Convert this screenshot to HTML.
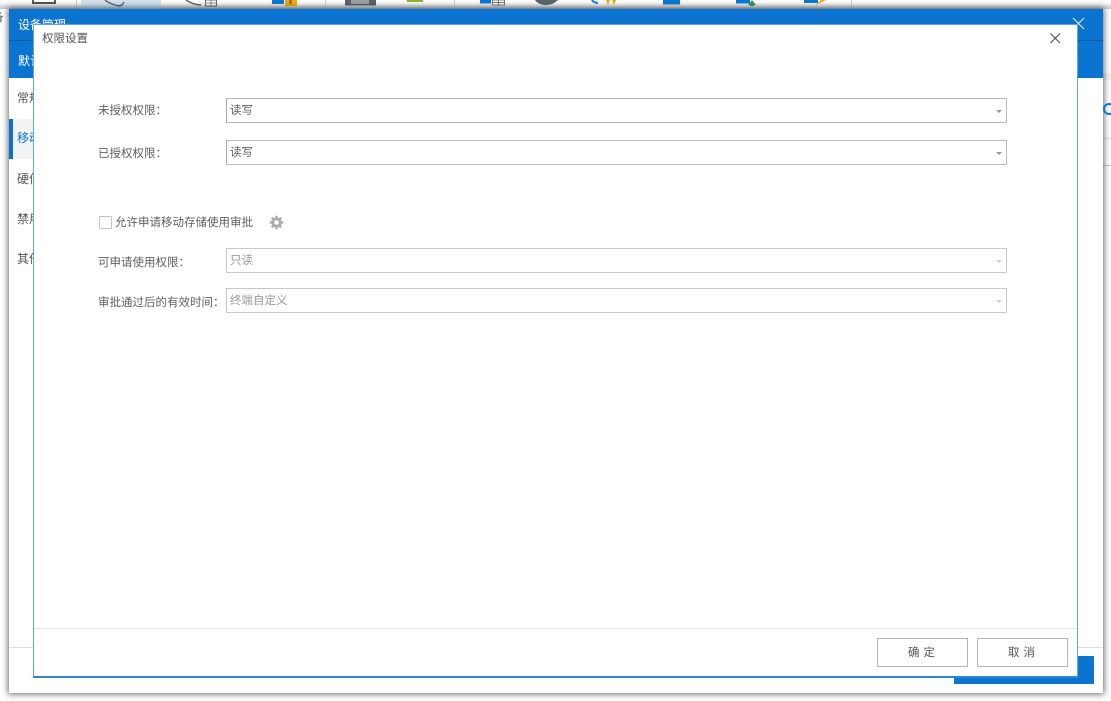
<!DOCTYPE html>
<html><head><meta charset="utf-8"><style>
html,body{margin:0;padding:0;background:#fff}
body{width:1111px;height:701px;position:relative;overflow:hidden;font-family:"Liberation Sans","Noto Sans CJK SC",sans-serif;font-size:11.5px;color:#5f5f5f}
.a{position:absolute}
.t{position:absolute;line-height:16px;white-space:nowrap;filter:blur(.3px)}
.sel{position:absolute;left:226px;width:779px;height:23px;border:1px solid #b9b9b9;border-left-color:#a8a8a8;background:#fff}
.sel span{position:absolute;left:3px;top:4px;line-height:16px;filter:blur(.3px)}
.sel i{position:absolute;right:4px;top:11px;width:0;height:0;border:3px solid transparent;border-top:3px solid #999;border-bottom:0}
.dis{border-color:#c8c8c8}.dis span{color:#999}.dis i{border-top-color:#ccc}
.btn{position:absolute;top:638px;width:89px;height:27px;border:1px solid #b5b5b5;background:#fff;text-align:center;line-height:29px;letter-spacing:4px;text-indent:2px;font-weight:400;color:#555;filter:blur(.2px)}
</style></head><body>
<div class="a" style="left:0;top:0;width:1111px;height:9px;background:linear-gradient(#fff,#f6f6f6 35%,#c4c4c4)"></div>
<div class="a" style="left:81px;top:0;width:80px;height:9px;background:linear-gradient(#d3e3f1,#c4d6e6)"></div>
<div class="a" style="left:76px;top:0;width:1px;height:8px;background:#ccc"></div>
<div class="a" style="left:325px;top:0;width:1px;height:8px;background:#ccc"></div>
<div class="a" style="left:454px;top:0;width:1px;height:8px;background:#ccc"></div>
<div class="a" style="left:851px;top:0;width:1px;height:8px;background:#ccc"></div>
<svg class="a" style="left:0;top:0" width="1111" height="9" viewBox="0 0 1111 9">
<path d="M33 0v3h22V0" fill="none" stroke="#555" stroke-width="2"/>
<path d="M105 0c2 2 8 5 14 6l3-1 2-3" fill="none" stroke="#666" stroke-width="1.500"/>
<path d="M186 0c3 2 9 5 15 5" fill="none" stroke="#666" stroke-width="1.500"/>
<rect x="205.500" y="0" width="11" height="6" fill="#fff" stroke="#666"/><path d="M211 0v6M205 3h11" stroke="#888"/>
<rect x="272" y="0" width="12" height="4" fill="#0a78d2"/><rect x="285" y="0" width="12" height="6" fill="#eeaa10"/><rect x="289.500" y="0" width="2" height="4" fill="#8a6400"/>
<rect x="345" y="0" width="31" height="5.500" fill="#5b5f6b"/><path d="M352 0v4M354 0v4M356 0v4M358 0v4M360 0v4M362 0v4M364 0v4M366 0v4M368 0v4" stroke="#ddd"/>
<rect x="407" y="0" width="16" height="2" fill="#8db32c"/>
<rect x="480" y="0" width="11" height="3.500" fill="#0a78d2"/><rect x="492.500" y="0" width="12" height="5" fill="#fff" stroke="#777"/><path d="M498.500 0v5M492 2.500h12" stroke="#777"/>
<path d="M535 0c2 3 6 5 11 5s9-2 12-5z" fill="#5b6470"/>
<path d="M592 0c1 2 4 3 6 3" fill="none" stroke="#0a78d2" stroke-width="2"/><path d="M606 0l2 5 2-5zM612 0l2 5 2-5z" fill="#eeaa10"/>
<rect x="663" y="0" width="17" height="4.500" fill="#0a78d2"/>
<rect x="736" y="0" width="14" height="3.500" fill="#0a78d2"/><path d="M752 0l4 5h-2v1h-4v-1h-2z" fill="#3c9a50"/>
<rect x="804" y="0" width="14" height="3" fill="#0a78d2"/><path d="M815 6l6-6h5l-6 3z" fill="#eeaa10"/>
</svg>
<div class="t" style="left:-8px;top:10px;color:#555">备</div>
<div class="a" style="left:1103px;top:73px;width:8px;height:7px;background:#f1f1f1"></div>
<div class="a" style="left:1103px;top:138px;width:8px;height:1px;background:#ddd"></div>
<div class="a" style="left:1103px;top:165px;width:8px;height:1px;background:#c4c4c4"></div>

<div class="a" style="left:9px;top:9px;width:1094px;height:684px;background:#fff;box-shadow:0 0 6px 1px rgba(0,0,0,.6)"></div>
<div class="a" style="left:9px;top:9px;width:1094px;height:31px;background:#0a74d0"></div>
<div class="a" style="left:9px;top:40px;width:1094px;height:1px;background:#0a5aa5"></div>
<div class="a" style="left:9px;top:41px;width:1094px;height:37px;background:#0a74d0"></div>
<div class="t" style="left:18px;top:17px;color:#fff;font-size:12px">设备管理</div>
<div class="t" style="left:18px;top:53px;color:#fff;font-size:12px">默认</div>
<svg class="a" style="left:1071px;top:16px" width="16" height="16"><path d="M2 2l11 11M13 2L2 13" stroke="#e8f3fc" stroke-width="1"/></svg>
<div class="a" style="left:9px;top:119px;width:24px;height:40px;background:#f3f3f3"></div>
<div class="a" style="left:9px;top:119px;width:4px;height:40px;background:#0a74d0"></div>
<div class="t" style="left:17px;top:90px;color:#555;font-size:12px">常规</div>
<div class="t" style="left:17px;top:130px;color:#0a74d0;font-size:12px">移动</div>
<div class="t" style="left:17px;top:171px;color:#555;font-size:12px">硬件</div>
<div class="t" style="left:17px;top:211px;color:#555;font-size:12px">禁用</div>
<div class="t" style="left:17px;top:251px;color:#555;font-size:12px">其他</div>
<div class="a" style="left:1103px;top:103px;width:8px;height:12px;overflow:hidden"><div style="width:12px;height:12px;border:2px solid #0a74d0;border-radius:50%;box-sizing:border-box;margin-left:0"></div></div>
<div class="a" style="left:9px;top:647px;width:1094px;height:1px;background:#ddd"></div>
<div class="a" style="left:954px;top:656px;width:140px;height:28px;background:#0a74d0"></div>

<div class="a" style="left:33px;top:24px;width:1043px;height:651px;background:#fff;border:1px solid #5fa6e0;border-bottom:2px solid #2a86d6"></div>
<div class="t" style="left:42px;top:31px;color:#555">权限设置</div>
<svg class="a" style="left:1049px;top:32px" width="13" height="13"><path d="M1.500 1.500l9.500 9.500M11 1.500L1.500 11" stroke="#555" stroke-width="1.200"/></svg>

<div class="t" style="left:98px;top:103px">未授权权限：</div>
<div class="sel" style="top:98px"><span>读写</span><i></i></div>
<div class="t" style="left:98px;top:146px">已授权权限：</div>
<div class="sel" style="top:140px"><span>读写</span><i></i></div>

<div class="a" style="left:99px;top:216px;width:11px;height:11px;border:1px solid #c4c4c4;border-radius:1px"></div>
<div class="t" style="left:115px;top:215px">允许申请移动存储使用审批</div>
<svg class="a" style="left:269px;top:215px" width="15" height="15" viewBox="0 0 16 16"><circle cx="8" cy="8" r="4" fill="none" stroke="#aaa" stroke-width="3"/><path d="M8 .800v3M8 12.200v3M.800 8h3M12.200 8h3M2.900 2.900l2.100 2.100M11 11l2.100 2.100M2.900 13.100L5 11M11 5l2.100-2.100" stroke="#aaa" stroke-width="2.400"/></svg>

<div class="t" style="left:98px;top:255px">可申请使用权限：</div>
<div class="sel dis" style="top:248px"><span>只读</span><i></i></div>
<div class="t" style="left:98px;top:295px">审批通过后的有效时间：</div>
<div class="sel dis" style="top:288px"><span>终端自定义</span><i></i></div>

<div class="a" style="left:34px;top:628px;width:1043px;height:1px;background:#e2e2e2"></div>
<div class="btn" style="left:877px">确定</div>
<div class="btn" style="left:977px">取消</div>
</body></html>
